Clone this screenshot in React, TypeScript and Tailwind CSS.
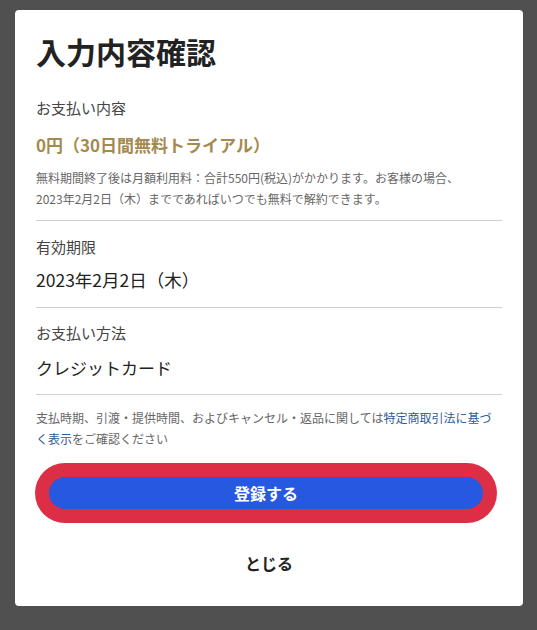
import React from "react";

export default function App() {
  return (
    <div
      className="w-[537px] h-[630px] bg-[#505050] pt-[10px] px-[15px]"
      style={{ fontFamily: '"Noto Sans CJK JP", "Noto Sans", sans-serif' }}
    >
      <div className="w-[508px] h-[596px] bg-white rounded-[4px] px-[21px] pt-[22px] flex flex-col">
        <h1 className="text-[30px] leading-[38px] font-bold text-[#222]">入力内容確認</h1>

        <div className="mt-[27px] text-[15px] leading-[22px] text-[#444]">お支払い内容</div>
        <div className="mt-[14px] text-[17px] leading-[24px] font-bold text-[#a48a4e]">0円（30日間無料トライアル）</div>
        <p className="mt-[10px] text-[12px] leading-[21px] text-[#666]">
          無料期間終了後は月額利用料：合計550円(税込)がかかります。お客様の場合、
          <br />
          2023年2月2日（木）までであればいつでも無料で解約できます。
        </p>
        <div className="mt-[11px] h-px bg-[#d0d0d0]" />

        <div className="mt-[15px] text-[15px] leading-[22px] text-[#444]">有効期限</div>
        <div className="mt-[9px] text-[17.5px] leading-[26px] text-[#222]">2023年2月2日（木）</div>
        <div className="mt-[14px] h-px bg-[#d0d0d0]" />

        <div className="mt-[14px] text-[15px] leading-[22px] text-[#444]">お支払い方法</div>
        <div className="mt-[11px] text-[17px] leading-[26px] text-[#222]">クレジットカード</div>
        <div className="mt-[13px] h-px bg-[#d0d0d0]" />

        <p className="mt-[12px] text-[12px] leading-[21px] text-[#666]">
          支払時期、引渡・提供時間、およびキャンセル・返品に関しては<span className="text-[#2f5c99]">特定商取引法に基づ</span>
          <br />
          <span className="text-[#2f5c99]">く表示</span>をご確認ください
        </p>

        <div className="mt-[14px] ml-[-1px] w-[462px] rounded-full bg-[#dc2f45] p-[14px]">
          <button className="w-full h-[32px] rounded-full bg-[#2658e0] text-white text-[16px] font-bold leading-[32px]">
            登録する
          </button>
        </div>

        <div className="mt-[28px] text-center text-[16px] leading-[24px] font-bold text-[#222]">とじる</div>
      </div>
    </div>
  );
}
